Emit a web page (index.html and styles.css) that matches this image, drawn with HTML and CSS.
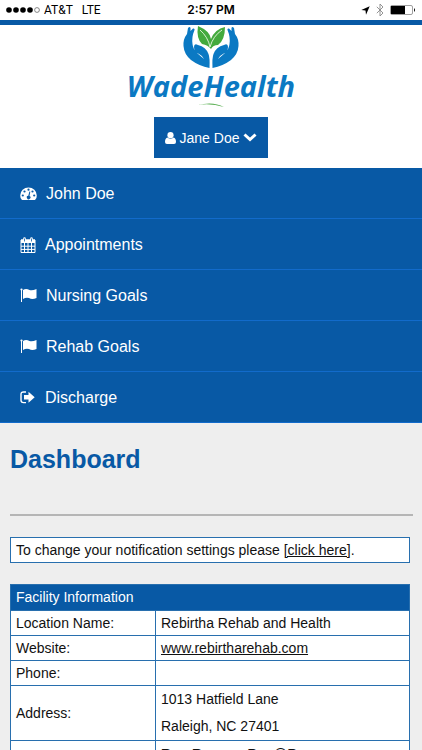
FILE: index.html
```html
<!DOCTYPE html>
<html lang="en">
<head>
<meta charset="utf-8">
<meta name="viewport" content="width=device-width, initial-scale=1">
<title>WadeHealth Dashboard</title>
<link rel="stylesheet" href="styles.css">
</head>
<body>
<div class="status">
  <div class="carrier">
    <svg width="35" height="8" viewBox="0 0 35 8" aria-hidden="true"><g fill="#000"><circle cx="3" cy="4" r="2.8"/><circle cx="10" cy="4" r="2.8"/><circle cx="17" cy="4" r="2.8"/><circle cx="24" cy="4" r="2.8"/></g><circle cx="31" cy="4" r="2.4" fill="none" stroke="#555" stroke-width=".7"/></svg>
    <span>AT&amp;T</span><span class="network">LTE</span>
  </div>
  <div class="time">2:57 PM</div>
  <div class="indicators">
    <svg width="9" height="9" viewBox="0 0 9 9" aria-hidden="true"><path d="M8.7.3 5 8.7 4.5 4.6.3 4z"/></svg>
    <svg width="8" height="14" viewBox="0 0 8 14" fill="none" stroke="#888" stroke-width=".9" aria-hidden="true"><path d="M.8 3.8 7 10 4 13V1l3 3L.8 10.2"/></svg>
    <svg width="26" height="10" viewBox="0 0 26 10" aria-hidden="true"><rect x=".5" y=".5" width="22" height="9" rx="1.5" fill="#fff" stroke="#777" stroke-width=".7"/><path d="M1 1h14v8H1z"/><path d="M24 3q2 2 0 4z"/></svg>
  </div>
</div>
<header class="header">
  <div class="logo">
    <svg width="58" height="44" viewBox="0 0 58 44" aria-hidden="true">
      <g fill="#0b79c3"><path d="M6 3Q8 1 8.500 3L8.500 6L11 3.500Q13 3 12.500 5Q9.500 12 10.500 19Q11 24 15 28L22 34Q21 31 17 29Q12 27 12 22Q12 18 16 20Q24 22 26.500 29Q28 33 27.500 43Q17 41 9 35Q2 29 1.500 21Q1 14 5 9Z"/></g>
      <g transform="matrix(-1 0 0 1 58 0)" fill="#0b79c3"><path d="M6 3Q8 1 8.500 3L8.500 6L11 3.500Q13 3 12.500 5Q9.500 12 10.500 19Q11 24 15 28L22 34Q21 31 17 29Q12 27 12 22Q12 18 16 20Q24 22 26.500 29Q28 33 27.500 43Q17 41 9 35Q2 29 1.500 21Q1 14 5 9Z"/></g>
      <path fill="#43aa3d" d="M16 1Q28 6 29 14Q33 4 43 2Q43 15 36 20Q31 20 29 24Q26 20 20 19Q14 13 16 1Z"/>
      <path d="M18 5Q26 12 28 22Q31 11 40 5" fill="none" stroke="#e8f6df" stroke-width=".9"/>
    </svg>
    <span class="brand">WadeHealth</span>
    <svg class="swoosh" width="26" height="5" viewBox="0 0 26 5" aria-hidden="true"><path fill="#55ad4e" d="M0 2Q15-2 26 4Q13 0 0 2"/></svg>
  </div>
  <button class="user" type="button">
    <svg width="11" height="12" viewBox="0 0 11 12" fill="#fff" aria-hidden="true"><circle cx="5.500" cy="3.200" r="3.100"/><path d="M2.500 5.500Q5.500 8 8.500 5.500Q11 6 11 10Q11 12 9 12H2Q0 12 0 10Q0 6 2.500 5.500"/></svg>
    <span>Jane Doe</span>
    <svg width="14" height="9" viewBox="0 0 14 9" fill="none" stroke="#fff" stroke-width="3" aria-hidden="true"><path d="m1.500 1.500 5.500 5 5.500-5"/></svg>
  </button>
</header>
<nav class="menu">
  <a href="#john"><svg width="17" height="17" viewBox="0 0 17 17" aria-hidden="true"><path fill="#fff" d="M2 14Q0 12 .2 9.500A8.300 8 0 0 1 16.800 9.500Q17 12 15 14Z"/><g fill="#0859a5"><circle cx="2.800" cy="9.500" r="1.100"/><circle cx="4.500" cy="5.500" r="1.100"/><circle cx="8.500" cy="3.700" r="1.100"/><circle cx="12.500" cy="5.500" r="1.100"/><circle cx="14.200" cy="9.500" r="1.100"/><path d="m9.400 5.500.9.200-.8 4.200a1.800 1.800 0 1 1-1.200-.2z"/></g></svg>John Doe</a>
  <a href="#appointments"><svg width="16" height="17" viewBox="0 0 16 17" fill="none" aria-hidden="true"><path fill="#fff" d="M1 2.500h14V6H1z"/><path d="M1 3h14v12.500H1zM1 9.200h14M1 12.400h14M4.500 6v10M8 6v10M11.500 6v10" stroke="#fff"/><path d="M4.500 1.500v3M11.500 1.500v3" stroke="#fff" stroke-width="2.600" stroke-linecap="round"/><path d="M4.500 1.500v3M11.500 1.500v3" stroke="#0859a5" stroke-width=".8"/></svg>Appointments</a>
  <a href="#nursing"><svg width="17" height="17" viewBox="0 0 17 17" fill="#fff" aria-hidden="true"><path d="M1 1h1v13H1zM3 2Q6 0 9.500 2Q12 3 16.500 1V10Q12 12 9 10Q6 9 3 11Z"/><circle cx="1.500" cy="1.500" r="1.100"/></svg>Nursing Goals</a>
  <a href="#rehab"><svg width="17" height="17" viewBox="0 0 17 17" fill="#fff" aria-hidden="true"><path d="M1 1h1v13H1zM3 2Q6 0 9.500 2Q12 3 16.500 1V10Q12 12 9 10Q6 9 3 11Z"/><circle cx="1.500" cy="1.500" r="1.100"/></svg>Rehab Goals</a>
  <a href="#discharge"><svg width="16" height="17" viewBox="0 0 16 17" aria-hidden="true"><path d="M6 2H3.500Q1 2 1 4.300V10.300Q1 12.600 3.500 12.600H6" fill="none" stroke="#fff" stroke-width="1.400"/><path fill="#fff" d="M4 5h4.500V1.800l6.200 5.500L8.500 12.800V9.600H4z"/></svg>Discharge</a>
</nav>
<main class="content">
  <h1>Dashboard</h1>
  <hr>
  <p class="notice">To change your notification settings please <a href="#settings">[click here]</a>.</p>
  <table class="facility">
    <thead><tr><th colspan="2">Facility Information</th></tr></thead>
    <tbody>
      <tr><td class="label">Location Name:</td><td>Rebirtha Rehab and Health</td></tr>
      <tr><td>Website:</td><td><a href="#website">www.rebirtharehab.com</a></td></tr>
      <tr><td>Phone:</td><td></td></tr>
      <tr><td>Address:</td><td class="address">1013 Hatfield Lane<br>Raleigh, NC 27401</td></tr>
      <tr><td></td><td class="contact"><b>Ron Rosen</b> - Ron@Ron</td></tr>
    </tbody>
  </table>
</main>
</body>
</html>
```
FILE: styles.css
```css
* { box-sizing: border-box; }
html { overflow: hidden; height: 100%; }
body {
  margin: 0;
  height: 100%;
  overflow: hidden;
  background: #eee;
  color: #111;
  font-family: "Liberation Sans", Arial, sans-serif;
  font-size: 14px;
}
a { color: inherit; }
.status {
  display: grid;
  grid-template-columns: 1fr auto 1fr;
  align-items: center;
  height: 20px;
  padding: 0 6px;
  background: #fff;
  color: #000;
  font: 12px/20px Roboto, sans-serif;
}
.carrier, .indicators { display: flex; align-items: center; gap: 3px; }
.network { margin-left: 6px; }
.time { font: 600 12px/20px Inter, sans-serif; }
.indicators { justify-content: flex-end; gap: 6px; }
.header {
  display: flex;
  flex-direction: column;
  align-items: center;
  height: 148px;
  border-top: 5px solid #0859a5;
  background: #fff;
}
.logo { display: flex; flex-direction: column; align-items: center; }
.brand {
  color: #0b79c3;
  font: italic 700 29px/34px "Open Sans", sans-serif;
}
.swoosh { margin-bottom: 9px; }
.user {
  display: flex;
  align-items: center;
  justify-content: center;
  gap: 4px;
  height: 41px;
  padding: 0 11px;
  border: 0;
  background: #0859a5;
  color: #fff;
  font: 14px "Liberation Sans", Arial, sans-serif;
}
.menu { background: #0859a5; }
.menu a {
  display: flex;
  align-items: center;
  gap: 9px;
  height: 51px;
  padding: 2px 20px 0;
  border-bottom: 1px solid #126bcb;
  color: #fff;
  font-size: 16px;
  text-decoration: none;
}
.content { padding: 0 12px 0 10px; }
h1 { margin: 0; padding-top: 20px; color: #0859a5; font-size: 25px; line-height: 32px; }
hr { margin: 39px -3px 0 0; border: 0; border-top: 2px solid #b5b5b5; }
.notice {
  margin: 21px 0;
  padding: 0 5px;
  border: 1px solid #286fae;
  background: #fff;
  line-height: 24px;
}
.facility { width: 100%; border-collapse: collapse; background: #fff; }
.facility th, .facility td {
  height: 25px;
  padding: 0 5px;
  border: 1px solid #286fae;
  text-align: left;
  line-height: 24px;
}
.facility th { padding-bottom: 1px; background: #0859a5; color: #fff; font-weight: 400; }
.label { width: 145px; }
.facility .address { line-height: 27px; }
.facility .contact { line-height: 26px; }
```
